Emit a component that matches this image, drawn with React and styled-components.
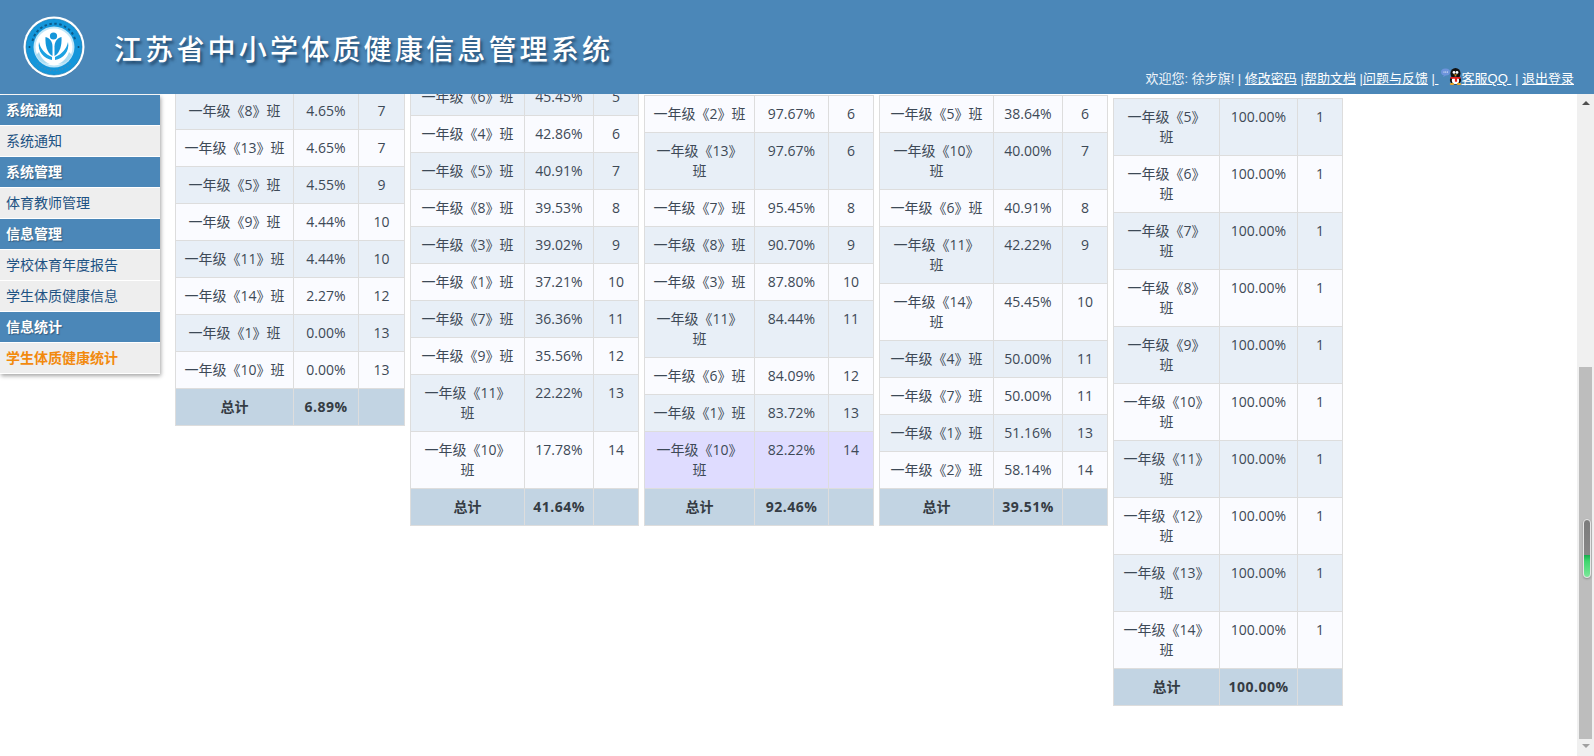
import styled, { createGlobalStyle } from 'styled-components';

const FONT = '"Open Sans", "Noto Sans CJK SC", sans-serif';
const BLUE = '#4b87b8';
const INK = '#3d4956';

const GlobalStyle = createGlobalStyle`
  html, body {
    margin: 0;
    padding: 0;
    height: 100%;
    overflow: hidden;
    background: #fff;
  }
  body {
    font-family: ${FONT};
    font-size: 14px;
    line-height: 20px;
    color: ${INK};
  }
`;

const menu = [
  { title: '系统通知', items: ['系统通知'] },
  { title: '系统管理', items: ['体育教师管理'] },
  { title: '信息管理', items: ['学校体育年度报告', '学生体质健康信息'] },
  { title: '信息统计', items: ['学生体质健康统计'], active: '学生体质健康统计' },
];

const tables = [
  {
    shift: -2,
    cols: [118, 65, 46],
    total: '6.89%',
    rows: [
      [8, '4.65%', 7], [13, '4.65%', 7], [5, '4.55%', 9], [9, '4.44%', 10],
      [11, '4.44%', 10], [14, '2.27%', 12], [1, '0.00%', 13], [10, '0.00%', 13],
    ],
  },
  {
    shift: -16,
    cols: [114, 69, 45],
    total: '41.64%',
    rows: [
      [6, '45.45%', 5], [4, '42.86%', 6], [5, '40.91%', 7], [8, '39.53%', 8],
      [3, '39.02%', 9], [1, '37.21%', 10], [7, '36.36%', 11], [9, '35.56%', 12],
      [11, '22.22%', 13], [10, '17.78%', 14],
    ],
  },
  {
    shift: 1,
    lightFirst: true,
    cols: [110, 74, 45],
    total: '92.46%',
    rows: [
      [2, '97.67%', 6], [13, '97.67%', 6], [7, '95.45%', 8], [8, '90.70%', 9],
      [3, '87.80%', 10], [11, '84.44%', 11], [6, '84.09%', 12], [1, '83.72%', 13],
      [10, '82.22%', 14, true],
    ],
  },
  {
    shift: 1,
    lightFirst: true,
    cols: [114, 69, 45],
    total: '39.51%',
    rows: [
      [5, '38.64%', 6], [10, '40.00%', 7], [6, '40.91%', 8], [11, '42.22%', 9],
      [14, '45.45%', 10], [4, '50.00%', 11], [7, '50.00%', 11], [1, '51.16%', 13],
      [2, '58.14%', 14],
    ],
  },
  {
    shift: 4,
    cols: [106, 78, 45],
    total: '100.00%',
    rows: [5, 6, 7, 8, 9, 10, 11, 12, 13, 14].map((n) => [n, '100.00%', 1]),
  },
];

const Page = styled.div`
  height: 756px;
  display: flex;
  flex-direction: column;
  overflow: hidden;
`;

const Header = styled.header`
  position: relative;
  z-index: 3;
  flex: none;
  height: 94px;
  background: ${BLUE};
  display: flex;
  align-items: flex-start;
  padding: 16px 0 0 23px;
  box-sizing: border-box;
`;

const Title = styled.h1`
  margin: 15px 0 0 29px;
  font-size: 28px;
  line-height: 34px;
  font-weight: 500;
  letter-spacing: 3.2px;
  color: #fff;
  white-space: nowrap;
  text-shadow: 2px 3px 3px rgba(20, 50, 80, 0.7);
  font-family: "Noto Sans CJK SC", sans-serif;
`;

const UserBar = styled.div`
  margin-left: auto;
  margin-top: 53px;
  margin-right: 20px;
  display: flex;
  align-items: center;
  color: #f0f5fa;
  font-family: "Liberation Sans", "Noto Sans CJK SC", sans-serif;
  font-size: 13px;
  line-height: 20px;
  white-space: pre;
`;

const TopLink = styled.a`
  color: #fff;
  text-decoration: underline;
`;

const QQMark = styled.svg`
  width: 21px;
  height: 17px;
  margin: -6px 0 0 2px;
  flex: none;
`;

const Body = styled.div`
  flex: 1;
  min-height: 0;
  display: flex;
`;

const Sidebar = styled.nav`
  position: relative;
  z-index: 2;
  flex: none;
  width: 160px;
  align-self: flex-start;
  margin-top: 1px;
  box-shadow: 1px 2px 4px rgba(0, 0, 0, 0.35);
  background: #fff;
`;

const MenuTitle = styled.div`
  height: 30px;
  line-height: 30px;
  margin-bottom: 1px;
  padding-left: 6px;
  background: ${BLUE};
  color: #fff;
  font-weight: 700;
  text-shadow: 1px 1px 1px rgba(30, 50, 70, 0.5);
`;

const MenuItem = styled.a`
  display: block;
  height: 30px;
  line-height: 30px;
  margin-bottom: 1px;
  padding-left: 6px;
  background: #eee;
  color: ${(p) => (p.$active ? '#f28a0e' : '#1d5283')};
  font-weight: ${(p) => (p.$active ? 700 : 400)};
`;

const Content = styled.main`
  flex: 1;
  min-width: 0;
  display: flex;
  align-items: flex-start;
  gap: 5px;
  padding-left: 15px;
`;

const RateTable = styled.table`
  flex: none;
  table-layout: fixed;
  width: ${(p) => p.$width}px;
  margin-top: ${(p) => p.$shift}px;
  border-collapse: collapse;
  font-size: 14px;
  line-height: 20px;
`;

const Col = styled.col`
  width: ${(p) => p.$w}px;
`;

const backgrounds = { tint: '#e8eff7', light: '#fafbff', mark: '#dfdcff', total: '#c2d4e3' };

const Row = styled.tr`
  background: ${(p) => backgrounds[p.$tone]};
`;

const Cell = styled.td`
  border: 1px solid #ddd;
  padding: 8px;
  text-align: center;
  vertical-align: top;
  color: ${INK};
`;

const TotalCell = styled(Cell)`
  font-weight: 700;
  color: #353c44;
`;

const TotalRate = styled(TotalCell)`
  letter-spacing: 0.5px;
`;

const ScrollTrack = styled.div`
  flex: none;
  width: 17px;
  background: #f0f0f0;
  display: flex;
  flex-direction: column;
  align-items: center;
  padding-top: 7px;
  box-sizing: border-box;
`;

const Arrow = styled.div`
  width: 0;
  height: 0;
  border-left: 4px solid transparent;
  border-right: 4px solid transparent;
  border-bottom: ${(p) => (p.$down ? '0' : '4px solid #505050')};
  border-top: ${(p) => (p.$down ? '4px solid #a0a0a0' : '0')};
  margin-top: ${(p) => (p.$down ? '5px' : '0')};
`;

const Thumb = styled.div`
  width: 13px;
  height: 372px;
  margin-top: 262px;
  background: #bdbdbd;
  position: relative;
`;

const Handle = styled.div`
  position: absolute;
  left: 4px;
  top: 152px;
  width: 8px;
  height: 59px;
  box-sizing: border-box;
  border-radius: 4px;
  border: 1px solid #e6e6e6;
  background: linear-gradient(
    to bottom,
    #7c7c7c 0,
    #878787 62%,
    #18b04f 62%,
    #3fd66e 72%,
    #7ce89a 100%
  );
  box-shadow: 0 1px 2px rgba(0, 0, 0, 0.25);
`;

const Logo = () => (
  <svg width="62" height="62" viewBox="0 0 62 62" aria-hidden="true">
    <circle cx="31" cy="32" r="30" fill="rgba(20,50,80,.25)" />
    <circle cx="31" cy="31" r="30.5" fill="#fff" />
    <circle cx="31" cy="31" r="28" fill="#1496da" stroke="#0d6fa8" strokeWidth="0.6" />
    <path d="M9.500 25a22 22 0 0 1 43 0" fill="none" stroke="#0c5c8d" strokeWidth="2" strokeDasharray="2.500 2.500" />
    <path d="M14 47a23 23 0 0 0 34 0" fill="none" stroke="#3b8fc0" strokeWidth="1.600" strokeDasharray="1.500 1.500" />
    <circle cx="6.500" cy="31" r="1" fill="#0c4f78" />
    <circle cx="55.500" cy="31" r="1" fill="#0c4f78" />
    <circle cx="31" cy="31" r="20.500" fill="#bfe6f8" />
    <circle cx="31" cy="31" r="18.500" fill="#fff" />
    <path d="M16 36c2 6 6 10 11 12-6 0-11-3-14-9zM46 36c-2 6-6 10-11 12 6 0 11-3 14-9z" fill="#a9dcf3" />
    <circle cx="30.500" cy="20" r="3.600" fill="#1496da" />
    <path d="M22.500 21c4.500 1 7 5 7 9.500V40c-5.500-3-7.500-11-7-19z" fill="#1496da" />
    <path d="M38.500 21c-4.500 1-7 5-7 9.500V40c5.500-3 7.500-11 7-19z" fill="#1496da" />
    <path d="M16 26c1.500 7 6 12 13 15v3c-8-1-15-9-13-18z" fill="#1ca2e2" />
    <path d="M45 26c-1.500 7-6 12-13 15v3c8-1 15-9 13-18z" fill="#1ca2e2" />
  </svg>
);

const QQIcon = () => (
  <QQMark viewBox="0 0 21 17" aria-hidden="true">
    <ellipse cx="4.500" cy="4" rx="4.500" ry="3.600" fill="#6d94dc" />
    <path d="M3 7l-1 2 3-1.600z" fill="#6d94dc" />
    <circle cx="3" cy="4" r=".6" fill="#fff" />
    <circle cx="4.700" cy="4" r=".6" fill="#fff" />
    <circle cx="6.400" cy="4" r=".6" fill="#fff" />
    <ellipse cx="14.500" cy="5.500" rx="5" ry="5.500" fill="#111" />
    <ellipse cx="14.500" cy="12" rx="5.600" ry="4.600" fill="#111" />
    <ellipse cx="14.500" cy="12.400" rx="3.600" ry="3.600" fill="#fff" />
    <circle cx="13" cy="4.400" r="1.400" fill="#fff" />
    <circle cx="16" cy="4.400" r="1.400" fill="#fff" />
    <path d="M12.500 6.400h4l-2 1.600z" fill="#f5b01e" />
    <path d="M9.500 9h10v1.800h-3.400v3h-2.200v-3H9.500z" fill="#e3201b" />
    <ellipse cx="11" cy="16" rx="2.300" ry="1" fill="#f5a91e" />
    <ellipse cx="18" cy="16" rx="2.300" ry="1" fill="#f5a91e" />
  </QQMark>
);

const rowTone = (data, index, mark) => {
  if (mark) return 'mark';
  const tinted = data.lightFirst ? index % 2 === 1 : index % 2 === 0;
  return tinted ? 'tint' : 'light';
};

const ClassTable = ({ data }) => (
  <RateTable $width={data.cols.reduce((a, b) => a + b, 0)} $shift={data.shift}>
    <colgroup>
      {data.cols.map((w, i) => (
        <Col key={i} $w={w} />
      ))}
    </colgroup>
    <tbody>
      {data.rows.map(([num, rate, rank, mark], index) => (
        <Row key={num} $tone={rowTone(data, index, mark)}>
          <Cell>一年级《{num}》班</Cell>
          <Cell>{rate}</Cell>
          <Cell>{rank}</Cell>
        </Row>
      ))}
      <Row $tone="total">
        <TotalCell>总计</TotalCell>
        <TotalRate>{data.total}</TotalRate>
        <TotalCell />
      </Row>
    </tbody>
  </RateTable>
);

const App = () => (
  <Page>
    <GlobalStyle />
    <Header>
      <Logo />
      <Title>江苏省中小学体质健康信息管理系统</Title>
      <UserBar>
        欢迎您: 徐步旗! | <TopLink>修改密码</TopLink> |<TopLink>帮助文档</TopLink> |<TopLink>问题与反馈</TopLink> |<TopLink> </TopLink>
        <QQIcon />
        <TopLink>客服QQ </TopLink> | <TopLink>退出登录</TopLink>
      </UserBar>
    </Header>
    <Body>
      <Sidebar>
        {menu.map((group) => (
          <div key={group.title}>
            <MenuTitle>{group.title}</MenuTitle>
            {group.items.map((item) => (
              <MenuItem key={item} $active={item === group.active}>
                {item}
              </MenuItem>
            ))}
          </div>
        ))}
      </Sidebar>
      <Content>
        {tables.map((t) => (
          <ClassTable key={t.total} data={t} />
        ))}
      </Content>
      <ScrollTrack>
        <Arrow />
        <Thumb>
          <Handle />
        </Thumb>
        <Arrow $down />
      </ScrollTrack>
    </Body>
  </Page>
);

export default App;
